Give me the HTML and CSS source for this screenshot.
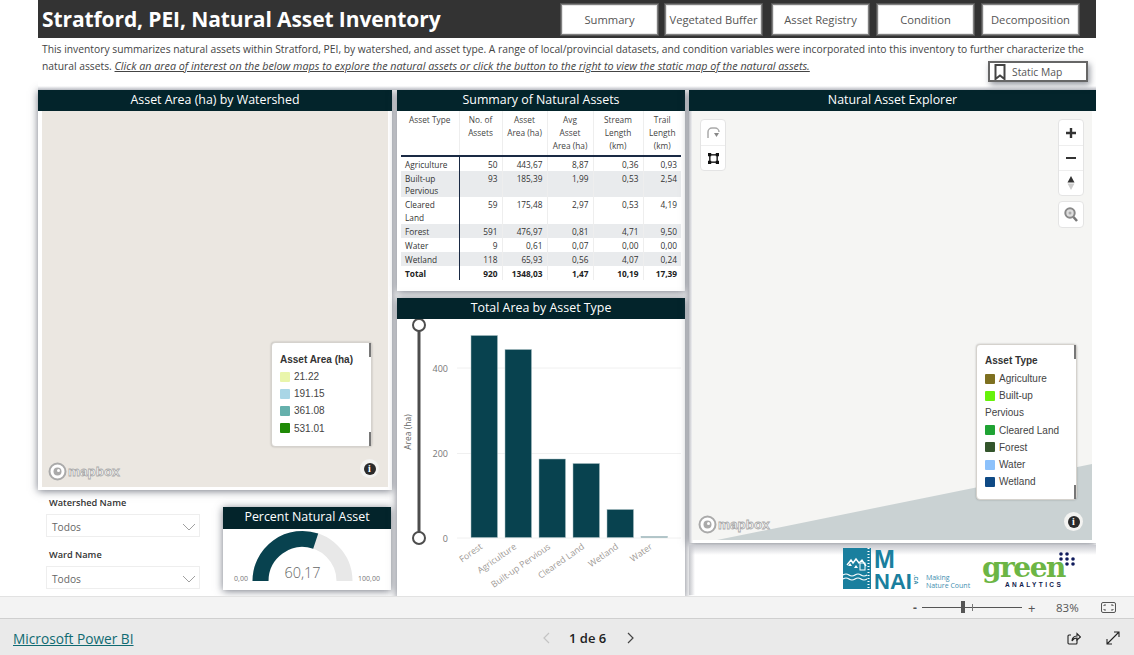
FILE: index.html
```html
<!DOCTYPE html>
<html lang="en">
<head>
<meta charset="utf-8">
<title>Stratford, PEI, Natural Asset Inventory</title>
<link rel="stylesheet" href="styles.css">
</head>
<body>
<main class="report">
  <header class="topbar">
    <h1 class="title">Stratford, PEI, Natural Asset Inventory</h1>
    <nav class="tabs">
      <a class="tab">Summary</a>
      <a class="tab">Vegetated Buffer</a>
      <a class="tab tab-registry">Asset Registry</a>
      <a class="tab tab-condition">Condition</a>
      <a class="tab">Decomposition</a>
    </nav>
  </header>
  <section class="intro">
    <p class="intro-text">This inventory summarizes natural assets within Stratford, PEI, by watershed, and asset type. A range of local/provincial datasets, and condition variables were incorporated into this inventory to further characterize the natural assets. <em class="intro-link">Click an area of interest on the below maps to explore the natural assets or click the button to the right to view the static map of the natural assets.</em></p>
    <button class="static-btn">
      <svg class="bookmark" width="12" height="16" viewBox="0 0 12 16"><path d="M1.500 1h9v14l-4.500-3.500L1.500 15z" fill="none" stroke="#444" stroke-width="2"/></svg>
      <span>Static Map</span>
    </button>
  </section>

  <div class="columns">
    <div class="col col-left">
      <section class="panel panel-watershed">
        <h2 class="panel-title">Asset Area (ha) by Watershed</h2>
        <div class="map map-watershed">
          <div class="legend legend-area">
            <span class="legend-bar legend-bar-top"></span>
            <span class="legend-bar legend-bar-bottom"></span>
            <h3 class="legend-title">Asset Area (ha)</h3>
            <div class="legend-row"><i class="swatch sw-a1"></i>21.22</div>
            <div class="legend-row"><i class="swatch sw-a2"></i>191.15</div>
            <div class="legend-row"><i class="swatch sw-a3"></i>361.08</div>
            <div class="legend-row"><i class="swatch sw-a4"></i>531.01</div>
          </div>
          <div class="mapbox">
            <svg width="19" height="19" viewBox="0 0 19 19"><circle cx="9.500" cy="9.500" r="8" fill="#fff" stroke="#aaa" stroke-width="2"/><circle cx="9.500" cy="9.500" r="4" fill="#aaa"/><circle cx="10.500" cy="8.500" r="1.500" fill="#fff"/></svg>
            <span>mapbox</span>
          </div>
          <div class="info"><span>i</span></div>
        </div>
      </section>
      <div class="left-bottom">
        <div class="slicers">
          <div class="slicer">
            <label class="slicer-label">Watershed Name</label>
            <div class="slicer-box"><span>Todos</span>
              <svg width="14" height="8" viewBox="0 0 14 8"><path d="M1 1l6 6 6-6" fill="none" stroke="#888" stroke-width=".8"/></svg>
            </div>
          </div>
          <div class="slicer">
            <label class="slicer-label">Ward Name</label>
            <div class="slicer-box"><span>Todos</span>
              <svg width="14" height="8" viewBox="0 0 14 8"><path d="M1 1l6 6 6-6" fill="none" stroke="#888" stroke-width=".8"/></svg>
            </div>
          </div>
        </div>
        <section class="panel panel-gauge">
          <h2 class="panel-title panel-title-gauge">Percent Natural Asset</h2>
          <svg class="gauge" width="168" height="61" viewBox="0 0 168 61">
            <path d="M37.500 52a42 42 0 0 1 84 0" fill="none" stroke="#e8e8e8" stroke-width="16"/>
            <path d="M37.500 52a42 42 0 0 1 55.200 -39.900" fill="none" stroke="#08424f" stroke-width="16"/>
            <text x="79.500" y="49" class="gauge-value" text-anchor="middle">60,17</text>
            <text x="18" y="52" class="gauge-end" text-anchor="middle">0,00</text>
            <text x="146" y="52" class="gauge-end" text-anchor="middle">100,00</text>
          </svg>
        </section>
      </div>
    </div>

    <div class="col col-mid">
      <section class="panel panel-table">
        <h2 class="panel-title">Summary of Natural Assets</h2>
        <table class="summary">
          <thead>
            <tr><th class="c-type">Asset Type</th><th>No. of Assets</th><th>Asset Area (ha)</th><th>Avg<br>Asset<br>Area (ha)</th><th>Stream Length (km)</th><th>Trail Length (km)</th></tr>
          </thead>
          <tbody>
            <tr><td class="c-type">Agriculture</td><td>50</td><td>443,67</td><td>8,87</td><td>0,36</td><td>0,93</td></tr>
            <tr class="odd"><td class="c-type">Built-up Pervious</td><td>93</td><td>185,39</td><td>1,99</td><td>0,53</td><td>2,54</td></tr>
            <tr class="tall"><td class="c-type">Cleared<br>Land</td><td>59</td><td>175,48</td><td>2,97</td><td>0,53</td><td>4,19</td></tr>
            <tr class="odd"><td class="c-type">Forest</td><td>591</td><td>476,97</td><td>0,81</td><td>4,71</td><td>9,50</td></tr>
            <tr><td class="c-type">Water</td><td>9</td><td>0,61</td><td>0,07</td><td>0,00</td><td>0,00</td></tr>
            <tr class="odd"><td class="c-type">Wetland</td><td>118</td><td>65,93</td><td>0,56</td><td>4,07</td><td>0,24</td></tr>
            <tr class="total"><td class="c-type">Total</td><td>920</td><td>1348,03</td><td>1,47</td><td>10,19</td><td>17,39</td></tr>
          </tbody>
        </table>
      </section>
      <section class="panel panel-chart">
        <h2 class="panel-title">Total Area by Asset Type</h2>
        <svg class="chart" width="288" height="275" viewBox="397 320 288 275">
          <line x1="457" x2="681" y1="369" y2="369" class="grid"/>
          <line x1="457" x2="681" y1="454.500" y2="454.500" class="grid"/>
          <line x1="457" x2="681" y1="539" y2="539" class="grid"/>
          <rect x="471" y="336.500" width="26.500" height="202" class="bar"/>
          <rect x="505" y="350.500" width="26.500" height="188" class="bar"/>
          <rect x="539" y="460" width="26.500" height="78.500" class="bar"/>
          <rect x="573" y="464.500" width="26.500" height="74" class="bar"/>
          <rect x="607" y="510.500" width="26.500" height="28" class="bar"/>
          <rect x="641" y="537.500" width="26.500" height="1" class="bar bar-faint"/>
          <text x="448" y="373" class="tick" text-anchor="end">400</text>
          <text x="448" y="458" class="tick" text-anchor="end">200</text>
          <text x="448" y="543" class="tick" text-anchor="end">0</text>
          <text transform="translate(411 433) rotate(-90)" class="axis" text-anchor="middle">Area (ha)</text>
          <text transform="translate(483 549) rotate(-35)" class="cat" text-anchor="end">Forest</text>
          <text transform="translate(517 549) rotate(-35)" class="cat" text-anchor="end">Agriculture</text>
          <text transform="translate(551 549) rotate(-35)" class="cat" text-anchor="end">Built-up Pervious</text>
          <text transform="translate(585 549) rotate(-35)" class="cat" text-anchor="end">Cleared Land</text>
          <text transform="translate(619 549) rotate(-35)" class="cat" text-anchor="end">Wetland</text>
          <text transform="translate(653 549) rotate(-35)" class="cat" text-anchor="end">Water</text>
          <line x1="419" x2="419" y1="326" y2="539" stroke="#4d4d4d" stroke-width="3"/>
          <circle cx="419" cy="326" r="6" fill="#fff" stroke="#4d4d4d" stroke-width="2"/>
          <circle cx="419" cy="539" r="6" fill="#fff" stroke="#4d4d4d" stroke-width="2"/>
        </svg>
      </section>
    </div>

    <div class="col col-right">
      <section class="panel panel-explorer">
        <h2 class="panel-title">Natural Asset Explorer</h2>
        <div class="map map-explorer">
          <svg class="water" width="400" height="429" viewBox="0 0 400 429"><polygon points="25,429 400,353 400,429" fill="#cad2d3"/></svg>
          <div class="ctrl ctrl-draw">
            <div class="ctrl-btn"><svg width="14" height="12" viewBox="0 0 14 12"><path d="M2 11V5a4 4 0 0 1 4-4h3a4 4 0 0 1 4 4" fill="none" stroke="#aaa" stroke-width="1.500"/><path d="M8 6h5l-2.500 4z" fill="#888"/></svg></div>
            <div class="ctrl-btn"><svg width="11" height="11" viewBox="0 0 12 12"><rect x="2" y="2" width="8" height="8" fill="none" stroke="#222" stroke-width="1.600"/><path d="M0 0h3.500v3.500H0zM8.500 0H12v3.500H8.500zM0 8.500h3.500V12H0zM8.500 8.500H12V12H8.500z" fill="#111"/></svg></div>
          </div>
          <div class="ctrl ctrl-zoom">
            <div class="ctrl-btn"><svg width="12" height="12" viewBox="0 0 12 12"><path d="M6 1v10M1 6h10" stroke="#333" stroke-width="2.400"/></svg></div>
            <div class="ctrl-btn"><svg width="12" height="12" viewBox="0 0 12 12"><path d="M1 6h10" stroke="#333" stroke-width="2"/></svg></div>
            <div class="ctrl-btn"><svg width="8" height="14" viewBox="0 0 8 14"><path d="M4 0l3.500 6.500h-7z" fill="#333"/><path d="M4 14L.5 7.500h7z" fill="#ccc"/></svg></div>
          </div>
          <div class="ctrl ctrl-locate">
            <div class="ctrl-btn"><svg width="14" height="15" viewBox="0 0 14 15"><circle cx="6" cy="6" r="4.700" fill="#ddd" stroke="#888" stroke-width="2"/><circle cx="6" cy="6" r="1.500" fill="#aaa"/><path d="M9.500 10l3.500 4" stroke="#777" stroke-width="2.500"/></svg></div>
          </div>
          <div class="legend legend-type">
            <span class="legend-bar legend-bar-top"></span>
            <span class="legend-bar legend-bar-bottom"></span>
            <h3 class="legend-title">Asset Type</h3>
            <div class="legend-row"><i class="swatch sw-t1"></i>Agriculture</div>
            <div class="legend-row"><i class="swatch sw-t2"></i>Built-up</div>
            <div class="legend-row">Pervious</div>
            <div class="legend-row"><i class="swatch sw-t3"></i>Cleared Land</div>
            <div class="legend-row"><i class="swatch sw-t4"></i>Forest</div>
            <div class="legend-row"><i class="swatch sw-t5"></i>Water</div>
            <div class="legend-row"><i class="swatch sw-t6"></i>Wetland</div>
          </div>
          <div class="mapbox">
            <svg width="19" height="19" viewBox="0 0 19 19"><circle cx="9.500" cy="9.500" r="8" fill="#fff" stroke="#aaa" stroke-width="2"/><circle cx="9.500" cy="9.500" r="4" fill="#aaa"/><circle cx="10.500" cy="8.500" r="1.500" fill="#fff"/></svg>
            <span>mapbox</span>
          </div>
          <div class="info"><span>i</span></div>
        </div>
      </section>
      <section class="panel panel-logos">
        <div class="mnai">
          <svg class="mnai-mark" width="28" height="41" viewBox="0 0 28 41">
            <rect width="28" height="41" fill="#1a7f9e"/>
            <path d="M4 17l4-5 2 3 3-4 3 4 3-3 4 6" fill="none" stroke="#fff" stroke-width="1.400"/>
            <path d="M5 18l2-3 2 3zM11 20l2-3 2 3z" fill="#fff"/>
            <rect x="17" y="15" width="5" height="7" fill="none" stroke="#fff"/>
            <path d="M0 27q3-2 6 0t6 0 6 0 6 0M0 31q3-2 6 0t6 0 6 0 6 0" fill="none" stroke="#fff" stroke-width="1.200"/>
            <path d="M25.500 0v41" stroke="#fff" stroke-dasharray="1 2" stroke-width="2"/>
          </svg>
          <div class="mnai-letters"><span class="mnai-m">M</span><span class="mnai-n">NAI</span></div>
          <span class="mnai-ca">.CA</span>
          <span class="mnai-tag">Making<br>Nature Count</span>
        </div>
        <div class="green">
          <span class="green-word">green</span>
          <span class="green-sub">ANALYTICS</span>
          <svg class="green-dots" width="18" height="14" viewBox="0 0 18 14">
            <g fill="#0f1a5c"><circle cx="3" cy="2" r="1.800"/><circle cx="9" cy="2" r="1.800"/>
            <circle cx="3" cy="7" r="1.800"/><circle cx="9" cy="7" r="1.800"/><circle cx="15" cy="7" r="1.800"/>
            <circle cx="9" cy="12" r="1.800"/><circle cx="15" cy="12" r="1.800"/></g>
          </svg>
        </div>
      </section>
    </div>
  </div>
</main>

<div class="zoombar">
  <span class="zoom-minus">-</span>
  <div class="zoom-track"><span class="zoom-tick"></span><span class="zoom-thumb"></span></div>
  <span class="zoom-plus">+</span>
  <span class="zoom-pct">83%</span>
  <svg width="15" height="11" viewBox="0 0 15 11"><rect x=".5" y=".5" width="14" height="10" rx="1.500" fill="none" stroke="#555"/><path d="M3 4V3h2M12 4V3h-2M3 7v1h2M12 7v1h-2" fill="none" stroke="#555"/></svg>
</div>

<footer class="footer">
  <a class="pbi-link">Microsoft Power BI</a>
  <div class="pager">
    <svg width="8" height="12" viewBox="0 0 8 12"><path d="M7 1L2 6l5 5" fill="none" stroke="#c4c4c4" stroke-width="1.200"/></svg>
    <span>1 de 6</span>
    <svg class="pager-next" width="8" height="12" viewBox="0 0 8 12"><path d="M1 1l5 5-5 5" fill="none" stroke="#444" stroke-width="1.200"/></svg>
  </div>
  <div class="footer-icons">
    <svg width="14" height="14" viewBox="0 0 14 14"><path d="M10 8v4a1 1 0 0 1-1 1H2a1 1 0 0 1-1-1V5a1 1 0 0 1 1-1h2" fill="none" stroke="#222" stroke-width="1.100"/><path d="M5 10c0-3 2-5 5-5V2.500l3.500 3.500L10 9V7c-2 0-4 1-5 3z" fill="none" stroke="#222" stroke-width="1.100"/></svg>
    <svg width="14" height="14" viewBox="0 0 14 14"><path d="M1 13L13 1M8 1h5v5M1 8v5h5" fill="none" stroke="#222" stroke-width="1.100"/></svg>
  </div>
</footer>
</body>
</html>
```
FILE: styles.css
```css
* { box-sizing: border-box; }
html, body { margin: 0; padding: 0; }
body {
  width: 1134px;
  height: 655px;
  overflow: hidden;
  background: #fff;
  font-family: "Open Sans", "Noto Sans", sans-serif;
  color: #333;
}
.report {
  height: 596px;
  padding-left: 38px;
  width: 1096px;
  overflow: hidden;
}
.topbar {
  height: 38px;
  background: #333;
  display: flex;
  justify-content: space-between;
  padding: 3px 16px 2px 4px;
}
.title {
  margin: 0;
  font-size: 21px;
  line-height: 33px;
  font-weight: 700;
  color: #fff;
  letter-spacing: -0.1px;
}
.tabs { display: flex; gap: 5px; }
.tab {
  width: 99px;
  background: #fff;
  border: 2px solid #808080;
  outline: 1px solid #555;
  outline-offset: -1px;
  box-shadow: inset 0 0 0 1px #e6e6e6;
  color: #555;
  font-size: 11.200px;
  display: flex;
  align-items: center;
  justify-content: center;
  white-space: nowrap;
}
.tab-registry { margin-left: 3px; margin-right: 1px; }
.tab-condition { margin-right: 1px; }

.intro {
  position: relative;
  height: 52px;
  background: linear-gradient(#fff 48px, #b8bac1 52px);
  padding: 3px 4px 0;
}
.intro-text {
  margin: 0;
  font-size: 10.300px;
  line-height: 17px;
  color: #444;
}
.intro-link { text-decoration: underline; font-size: 10.750px; }
.static-btn {
  position: absolute;
  left: 950px;
  top: 23px;
  width: 100px;
  height: 21px;
  padding: 0 0 0 4px;
  display: flex;
  align-items: center;
  gap: 6px;
  background: #fff;
  border: 2px solid #666;
  box-shadow: 2px 3px 6px rgba(70, 75, 90, .55);
  font: 10.300px "Open Sans", sans-serif;
  color: #555;
}

.columns {
  display: flex;
  gap: 5px;
  height: 506px;
  align-items: flex-start;
}
.col { display: flex; flex-direction: column; }
.col-left { width: 354px; }
.col-mid { width: 288px; gap: 7px; }
.col-right { width: 407px; margin-left: -1px; gap: 2px; }

.panel {
  background: #fff;
  box-shadow: 0 1px 8px rgba(70, 75, 90, .75);
}
.panel-title {
  margin: 0;
  height: 21px;
  background: #03242b;
  color: #fff;
  font-size: 12.400px;
  font-weight: 400;
  line-height: 20px;
  text-align: center;
}

.panel-watershed { height: 400px; }
.map { position: relative; overflow: hidden; }
.map-watershed { margin: 0 4px; height: 376px; background: #ebe7e1; }
.legend {
  position: absolute;
  background: #fff;
  border: 1px solid #d5d2cd;
  border-radius: 4px;
  box-shadow: 0 0 2px rgba(0,0,0,.25);
  font-family: "Liberation Sans", sans-serif;
  font-size: 10px;
  color: #444;
  padding: 9px 8px;
}
.legend-area { left: 229px; top: 231px; width: 101px; height: 105px; }
.legend-type { left: 284px; top: 233px; width: 101px; height: 156px; padding-top: 8px; }
.legend-bar { position: absolute; right: 0; width: 2px; height: 14px; background: #777; }
.legend-bar-top { top: 0; }
.legend-bar-bottom { bottom: 0; }
.legend-title { margin: 0 0 2px; font-size: 10px; font-weight: 700; line-height: 15px; color: #333; }
.legend-area .legend-title { margin-bottom: 1px; }
.legend-row { display: flex; align-items: center; height: 17.200px; gap: 4px; white-space: nowrap; }
.swatch { width: 10px; height: 10px; border-radius: 1px; display: block; }
.sw-a1 { background: #e9f5ab; }
.sw-a2 { background: #a9d6e6; }
.sw-a3 { background: #65b0ac; }
.sw-a4 { background: #1f8a06; }
.sw-t1 { background: #7e7020; }
.sw-t2 { background: #66f20a; }
.sw-t3 { background: #1fa334; }
.sw-t4 { background: #33552c; }
.sw-t5 { background: #8cc1fb; }
.sw-t6 { background: #0f4a85; }

.mapbox {
  position: absolute;
  left: 6px;
  bottom: 6px;
  display: flex;
  align-items: center;
  gap: 1px;
  font-family: "Liberation Sans", sans-serif;
  font-weight: 700;
  font-size: 13.500px;
  color: #fff;
  -webkit-text-stroke: .8px #aaa;
}
.info {
  position: absolute;
  right: 9px;
  bottom: 9px;
  width: 19px;
  height: 19px;
  border-radius: 50%;
  background: #f3f3f1;
  display: flex;
  align-items: center;
  justify-content: center;
}
.info span {
  width: 12px;
  height: 12px;
  border-radius: 50%;
  background: #2b2b2b;
  color: #fff;
  font: 700 10px/12px "Liberation Serif", serif;
  text-align: center;
}

.left-bottom {
  display: flex;
  justify-content: space-between;
  padding-left: 8px;
  margin-top: 5px;
}
.slicers { width: 154px; display: flex; flex-direction: column; gap: 11px; margin-top: 1px; }
.slicer-label { display: block; font-size: 9.200px; font-weight: 600; line-height: 14px; margin-left: 3px; color: #333; }
.slicer-box {
  height: 23px;
  margin-top: 4px;
  border: 1px solid #eee;
  background: #fff;
  display: flex;
  align-items: center;
  justify-content: space-between;
  padding: 2px 3px 0 5px;
  font-size: 10.200px;
  color: #666;
}
.panel-gauge { width: 168px; height: 83px; margin-top: 12px; margin-right: 1px; }
.panel-title-gauge { height: 22px; }
.gauge { display: block; }
.gauge-value { font-size: 14.500px; font-weight: 300; fill: #666; }
.gauge-end { font-size: 7px; fill: #777; }

.panel-table { height: 201px; }
.summary {
  border-collapse: collapse;
  table-layout: fixed;
  margin: 0 0 0 4px;
  width: 280px;
  font-size: 8.300px;
  line-height: 13px;
  color: #333;
}
.summary th {
  font-weight: 400;
  height: 45px;
  vertical-align: top;
  text-align: center;
  padding: 2px 3px 0;
  border-left: 1px solid #eee;
  border-bottom: 2px solid #1a2a44;
  color: #444;
  width: 46px;
}
.summary th:first-child { width: 58px; border-left: 0; }
.summary th:nth-child(2) { width: 43px; }
.summary th:nth-child(3) { width: 45px; }
.summary th:nth-child(4) { width: 46px; }
.summary th:nth-child(5) { width: 50px; }
.summary th:nth-child(6) { width: 38px; }
.summary td {
  text-align: right;
  vertical-align: top;
  padding: 2px 4px 0;
  height: 14px;
  border-left: 1px solid #eee;
  line-height: 12px;
}
.summary td.c-type { text-align: left; padding-left: 4px; padding-right: 0; border-left: 0; border-right: 1px solid #1a2a44; }
.summary .tall td { height: 27px; line-height: 12.500px; }
.summary .odd td { background: #e9ebed; }
.summary .total td { font-weight: 700; color: #222; }

.panel-chart { height: 300px; }
.chart { display: block; }
.grid { stroke: #f0f0f0; stroke-width: 1; }
.bar { fill: #08424f; stroke: #a9c0c4; stroke-width: .5; }
.bar-faint { fill: #7a9ca2; }
.tick { font-size: 9px; fill: #777; }
.axis { font-size: 8.500px; fill: #666; }
.cat { font-size: 8.800px; fill: #a09a96; }

.panel-explorer { height: 453px; background: linear-gradient(to right, #bfc0c6, #fff 4px); }
.map-explorer { margin: 0 4px 0 3px; height: 429px; background: #f5f5f3; }
.water { position: absolute; left: 0; top: 0; }
.ctrl {
  position: absolute;
  width: 26px;
  background: #fff;
  border: 1px solid #e4e4e4;
  border-radius: 4px;
  display: flex;
  flex-direction: column;
}
.ctrl-btn { height: 25px; display: flex; align-items: center; justify-content: center; border-top: 1px solid #eee; }
.ctrl-btn:first-child { border-top: 0; }
.ctrl-draw { left: 8px; top: 8px; }
.ctrl-zoom { right: 8px; top: 8px; }
.ctrl-locate { right: 8px; top: 90px; }

.panel-logos {
  height: 50px;
  background: linear-gradient(#c9cad0, rgba(255,255,255,0) 10px), linear-gradient(to right, #c4c5ca, #fff 6px);
  box-shadow: none;
  display: flex;
  align-items: flex-start;
  padding: 3px 0 0 154px;
}
.mnai { display: flex; align-items: flex-start; width: 139px; color: #1a7f9e; }
.mnai-mark { display: block; flex: none; }
.mnai-letters { display: flex; flex-direction: column; margin: 2px 0 0 3px; font-family: "Liberation Sans", sans-serif; font-weight: 700; }
.mnai-m { font-size: 25px; line-height: 19px; height: 22px; }
.mnai-n { font-size: 22px; line-height: 19px; }
.mnai-ca { font: 700 5.500px/6px "Liberation Sans", sans-serif; writing-mode: vertical-rl; margin-top: 27px; margin-left: 1px; }
.mnai-tag { font: 7px/8px "Open Sans", sans-serif; margin-left: 7px; margin-top: 26px; white-space: nowrap; color: #3f8fb0; }
.green { position: relative; width: 100px; height: 42px; }
.green-word {
  position: absolute;
  left: 0;
  top: 5px;
  font: 700 28px/30px "DejaVu Serif", "Liberation Serif", serif;
  letter-spacing: -1.500px;
  color: #6cb544;
}
.green-sub {
  position: absolute;
  left: 23px;
  top: 33px;
  font: 700 6.500px/8px "Liberation Sans", sans-serif;
  letter-spacing: 2.400px;
  color: #0f1a4c;
}
.green-dots { position: absolute; left: 76px; top: 4px; }

.zoombar {
  height: 23px;
  background: #f3f3f3;
  border-top: 1px solid #e2e2e2;
  border-bottom: 1px solid #cfcfcf;
  display: flex;
  align-items: center;
  padding-left: 913px;
  font-size: 11.500px;
  color: #555;
}
.zoom-minus { width: 9px; font-weight: 700; font-size: 12px; }
.zoom-track { position: relative; width: 100px; height: 1px; background: #555; }
.zoom-tick { position: absolute; left: 50px; top: -3px; width: 1px; height: 7px; background: #777; }
.zoom-thumb { position: absolute; left: 39px; top: -6px; width: 4px; height: 12px; background: #555; }
.zoom-plus { margin-left: 6px; font-size: 13px; width: 28px; }
.zoom-pct { width: 45px; }

.footer {
  height: 36px;
  background: #eaeaea;
  display: flex;
  align-items: center;
  padding: 2px 0 0 13px;
}
.pbi-link { font-size: 13.700px; color: #106a72; text-decoration: underline; width: 529px; }
.pager { display: flex; align-items: center; gap: 19px; font-size: 13px; color: #222; font-weight: 600; }
.pager-next { margin-left: 2px; }
.footer-icons { margin-left: auto; display: flex; gap: 25px; padding-right: 14px; }
```
